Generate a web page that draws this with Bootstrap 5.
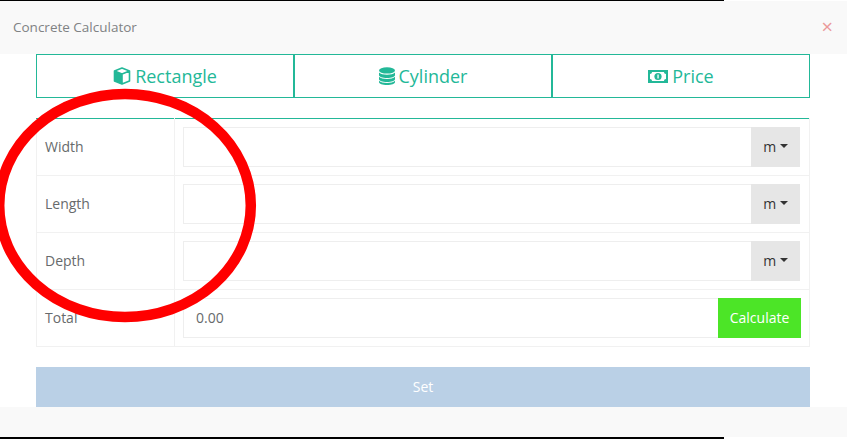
<!DOCTYPE html>
<html lang="en">
<head>
  <meta charset="UTF-8" />
  <meta name="viewport" content="width=device-width, initial-scale=1.0" />
  <title>Concrete Calculator</title>
  <link href="https://cdn.jsdelivr.net/npm/bootstrap@5.3.6/dist/css/bootstrap.min.css" rel="stylesheet">
  <style>
    html, body { height: 439px; overflow: hidden; }
    body {
      font-family: "Open Sans", sans-serif;
      font-size: 14px;
      color: #676a6c;
      background-color: #fff;
      position: relative;
    }
    .edge-line { height: 1px; width: 724px; background-color: #000; }
    .edge-line-bottom { height: 2px; }
    .calc-head {
      height: 53px;
      background-color: #f9f9f9;
      padding: 0 13px 1px;
      color: #808284;
      font-size: 13.5px;
    }
    .calc-close { color: #eb9a9a; font-size: 20px; line-height: 1; margin-right: 1px; }
    .calc-body { padding: 0 37px 0 36px; height: 353px; }
    .calc-tab {
      flex: 1 1 0;
      height: 44px;
      border: 1px solid #23b898;
      border-left-width: 0;
      border-right-width: 2px;
      border-radius: 0;
      color: #23b898;
      font-size: 18px;
      padding: 0;
    }
    .calc-tab:first-child { border-left-width: 1px; }
    .calc-tab:last-child { border-right-width: 1px; }
    .calc-tab svg { flex: none; }
    .calc-table { margin: 20px 0 0; width: 100%; table-layout: fixed; border-collapse: collapse; color: #676a6c; }
    .calc-table tr:first-child td { border-top: 1px solid #23b898; }
    .calc-table td {
      height: 57px;
      padding: 8px;
      border: 1px solid #f1f1f1;
      vertical-align: middle;
    }
    .calc-table td:first-child { width: 138px; padding-bottom: 10px; }
    .calc-input {
      height: 40px;
      border: 1px solid #eee;
      border-radius: 0 !important;
      font-size: 14px;
      color: #676a6c;
      padding: 0 12px 2px;
      box-shadow: none;
    }
    .unit-btn {
      width: 49px;
      height: 40px;
      padding: 0 0 1px;
      background-color: #e6e6e6;
      border: 0;
      border-radius: 0 !important;
      font-size: 14px;
      color: #333;
      margin-right: 1px;
    }
    .calc-go {
      width: 83px;
      height: 40px;
      padding: 0 0 1px;
      background-color: #4ce527;
      border: 0;
      border-radius: 0 !important;
      color: #fff;
      font-size: 14px;
    }
    .set-btn {
      display: block;
      width: 100%;
      height: 40px;
      margin-top: 20px;
      padding: 0 0 2px;
      background-color: #bad0e6;
      border: 0;
      border-radius: 0;
      color: #fff;
      font-size: 14px;
    }
    .calc-foot { height: 30px; background-color: #f9f9f9; }
    .red-ring { position: absolute; left: -6px; top: 88px; pointer-events: none; }
  </style>
</head>
<body>
  <div class="edge-line"></div>
  <div class="calc-head d-flex align-items-center justify-content-between">
    <span>Concrete Calculator</span>
    <span class="calc-close">&times;</span>
  </div>

  <div class="calc-body">
    <div class="d-flex">
      <button type="button" class="btn calc-tab d-flex align-items-center justify-content-center gap-1">
        <svg width="18" height="18" viewBox="0 0 18 18"><path fill="none" stroke="#23b898" stroke-width="1.600" stroke-linejoin="round" d="M9 1 1.500 3.900v10L9 17l7.500-3.100v-10zM1.500 3.900 9 7l7.500-3.100M9 7v10"/><path fill="#23b898" d="M1.500 3.900 9 7v10l-7.500-3.100z"/></svg>
        <span>Rectangle</span>
      </button>
      <button type="button" class="btn calc-tab d-flex align-items-center justify-content-center gap-1">
        <svg width="16" height="18" viewBox="0 0 16 18"><ellipse cx="8" cy="3.400" rx="8" ry="3.200" fill="#23b898"/><path fill="#23b898" d="M0 5.600c1.500 1.500 4.500 2.200 8 2.200s6.500-.7 8-2.200v2.600c0 1.600-3.600 2.800-8 2.800s-8-1.200-8-2.800zM0 9.800c1.500 1.500 4.500 2.200 8 2.200s6.500-.7 8-2.200v2.500c0 1.600-3.600 2.800-8 2.800s-8-1.200-8-2.800zM0 13.800c1.500 1.500 4.500 2.200 8 2.200s6.500-.7 8-2.200v1.400c0 1.600-3.600 2.800-8 2.800s-8-1.200-8-2.800z"/></svg>
        <span>Cylinder</span>
      </button>
      <button type="button" class="btn calc-tab d-flex align-items-center justify-content-center gap-1">
        <svg width="20" height="13" viewBox="0 0 20 13"><path fill="#23b898" fill-rule="evenodd" d="M0 0h20v13H0zM4 2C4 3.200 3.200 4 2 4v5c1.200 0 2 .8 2 2h12c0-1.200.8-2 2-2V4c-1.200 0-2-.8-2-2z"/><circle cx="10" cy="6.500" r="3.600" fill="#23b898"/><rect x="9.400" y="4.500" width="1.300" height="4" fill="#fff"/></svg>
        <span>Price</span>
      </button>
    </div>

    <table class="calc-table">
      <tbody>
        <tr>
          <td>Width</td>
          <td>
            <div class="input-group">
              <input type="text" class="form-control calc-input">
              <button type="button" class="btn unit-btn dropdown-toggle">m</button>
            </div>
          </td>
        </tr>
        <tr>
          <td>Length</td>
          <td>
            <div class="input-group">
              <input type="text" class="form-control calc-input">
              <button type="button" class="btn unit-btn dropdown-toggle">m</button>
            </div>
          </td>
        </tr>
        <tr>
          <td>Depth</td>
          <td>
            <div class="input-group">
              <input type="text" class="form-control calc-input">
              <button type="button" class="btn unit-btn dropdown-toggle">m</button>
            </div>
          </td>
        </tr>
        <tr>
          <td>Total</td>
          <td>
            <div class="input-group">
              <input type="text" class="form-control calc-input" value="0.00">
              <button type="button" class="btn calc-go">Calculate</button>
            </div>
          </td>
        </tr>
      </tbody>
    </table>

    <button type="button" class="btn set-btn">Set</button>
  </div>

  <div class="calc-foot"></div>
  <div class="edge-line edge-line-bottom"></div>

  <svg class="red-ring" width="264" height="236" viewBox="0 0 264 236">
    <ellipse cx="131" cy="117.500" rx="125.800" ry="111.500" fill="none" stroke="#ff0000" stroke-width="10.500"/>
  </svg>

  <script src="https://cdn.jsdelivr.net/npm/bootstrap@5.3.6/dist/js/bootstrap.bundle.min.js"></script>
</body>
</html>
